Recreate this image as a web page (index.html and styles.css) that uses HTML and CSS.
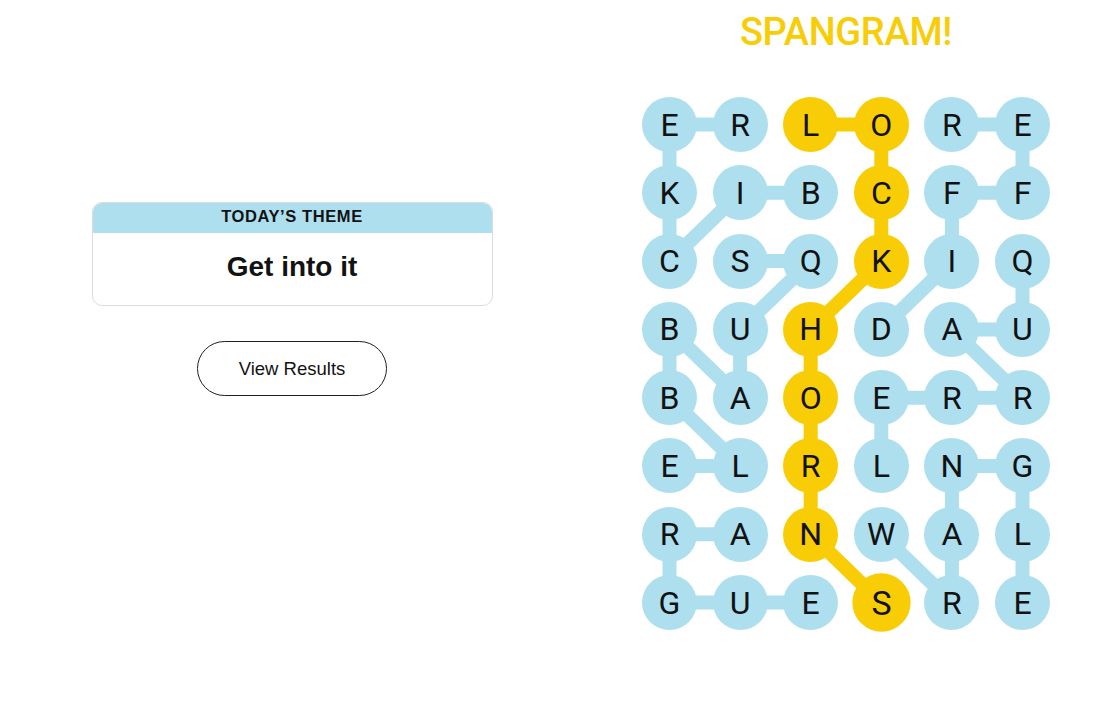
FILE: index.html
```html
<!DOCTYPE html>
<html lang="en">
<head>
<meta charset="utf-8">
<title>Strands</title>
<link rel="stylesheet" href="styles.css">
</head>
<body>
<main class="page">
  <section class="side">
    <div class="theme-card">
      <div class="theme-head">TODAY’S THEME</div>
      <div class="theme-body">Get into it</div>
    </div>
    <button class="results-btn" type="button">View Results</button>
  </section>
  <section class="board-area">
    <h1 class="spangram-title">SPANGRAM!</h1>
    <div class="board">
      <svg class="links" width="408" height="533" viewBox="0 0 408 533" aria-hidden="true">
        <g fill="none" stroke-width="14" stroke-linejoin="round" stroke-linecap="round">
          <polyline class="link-blue" points="168.7,95.8 98.1,95.8 27.5,164.1 27.5,95.8 27.5,27.5 98.1,27.5"/>
          <polyline class="link-blue" points="98.1,164.1 168.7,164.1 98.1,232.4 98.1,300.7 27.5,232.4 27.5,300.7 98.1,369 27.5,369"/>
          <polyline class="link-blue" points="98.1,437.3 27.5,437.3 27.5,505.6 98.1,505.6 168.7,505.6"/>
          <polyline class="link-blue" points="239.3,232.4 309.9,164.1 309.9,95.8 380.5,95.8 380.5,27.5 309.9,27.5"/>
          <polyline class="link-blue" points="380.5,164.1 380.5,232.4 309.9,232.4 380.5,300.7 309.9,300.7 239.3,300.7 239.3,369"/>
          <polyline class="link-blue" points="239.3,437.3 309.9,505.6 309.9,437.3 309.9,369 380.5,369 380.5,437.3 380.5,505.6"/>
          <polyline class="link-gold" points="168.7,27.5 239.3,27.5 239.3,95.8 239.3,164.1 168.7,232.4 168.7,300.7 168.7,369 168.7,437.3 239.3,505.6"/>
        </g>
      </svg>
      <div class="cell blue">E</div><div class="cell blue">R</div><div class="cell gold">L</div><div class="cell gold">O</div><div class="cell blue">R</div><div class="cell blue">E</div>
      <div class="cell blue">K</div><div class="cell blue">I</div><div class="cell blue">B</div><div class="cell gold">C</div><div class="cell blue">F</div><div class="cell blue">F</div>
      <div class="cell blue">C</div><div class="cell blue">S</div><div class="cell blue">Q</div><div class="cell gold">K</div><div class="cell blue">I</div><div class="cell blue">Q</div>
      <div class="cell blue">B</div><div class="cell blue">U</div><div class="cell gold">H</div><div class="cell blue">D</div><div class="cell blue">A</div><div class="cell blue">U</div>
      <div class="cell blue">B</div><div class="cell blue">A</div><div class="cell gold">O</div><div class="cell blue">E</div><div class="cell blue">R</div><div class="cell blue">R</div>
      <div class="cell blue">E</div><div class="cell blue">L</div><div class="cell gold">R</div><div class="cell blue">L</div><div class="cell blue">N</div><div class="cell blue">G</div>
      <div class="cell blue">R</div><div class="cell blue">A</div><div class="cell gold">N</div><div class="cell blue">W</div><div class="cell blue">A</div><div class="cell blue">L</div>
      <div class="cell blue">G</div><div class="cell blue">U</div><div class="cell blue">E</div><div class="cell gold last">S</div><div class="cell blue">R</div><div class="cell blue">E</div>
    </div>
  </section>
</main>
</body>
</html>
```

FILE: styles.css
```css
* { box-sizing: border-box; }

html, body {
  margin: 0;
  padding: 0;
  background: #ffffff;
  color: #121212;
  font-family: "Liberation Sans", Arial, sans-serif;
}

.page {
  display: flex;
  width: 1104px;
  height: 715px;
}

.side {
  width: 584px;
  display: flex;
  flex-direction: column;
  align-items: center;
  padding-top: 202px;
}

.theme-card {
  width: 401px;
  border: 1px solid #dcdcdc;
  border-radius: 10px;
  overflow: hidden;
}

.theme-head {
  height: 30px;
  background: #aedfee;
  display: flex;
  align-items: center;
  justify-content: center;
  padding-bottom: 3px;
  font-weight: 700;
  font-size: 16.5px;
  letter-spacing: 0.6px;
  color: #121212;
}

.theme-body {
  height: 72px;
  display: flex;
  align-items: center;
  justify-content: center;
  padding-bottom: 5px;
  font-weight: 700;
  font-size: 28px;
  color: #121212;
}

.results-btn {
  margin-top: 35px;
  width: 190px;
  height: 55px;
  border: 1px solid #1f1f1f;
  border-radius: 28px;
  background: #ffffff;
  color: #121212;
  font-family: "Liberation Sans", Arial, sans-serif;
  font-size: 18.5px;
  padding: 0;
}

.board-area {
  flex: 1;
  display: flex;
  flex-direction: column;
  align-items: center;
  padding-left: 4px;
}

.spangram-title {
  margin: 13px 0 0 0;
  font-family: Roboto, "Liberation Sans", sans-serif;
  font-weight: 500;
  font-size: 38px;
  line-height: 38px;
  color: #f8cd05;
  letter-spacing: -0.3px;
}

.board {
  position: relative;
  margin-top: 46px;
  display: grid;
  grid-template-columns: repeat(6, 55px);
  grid-auto-rows: 55px;
  column-gap: 15.6px;
  row-gap: 13.3px;
}

.links {
  position: absolute;
  left: 0;
  top: 0;
}

.link-blue { stroke: #aedfee; }
.link-gold { stroke: #f8cd05; }

.cell {
  position: relative;
  width: 55px;
  height: 55px;
  border-radius: 50%;
  display: flex;
  align-items: center;
  justify-content: center;
  font-family: Roboto, "Liberation Sans", sans-serif;
  font-size: 32px;
  line-height: 1;
  color: #121212;
}

.cell.blue { background: #aedfee; }
.cell.gold { background: #f8cd05; }
.cell.last { transform: scale(1.06); }
```
